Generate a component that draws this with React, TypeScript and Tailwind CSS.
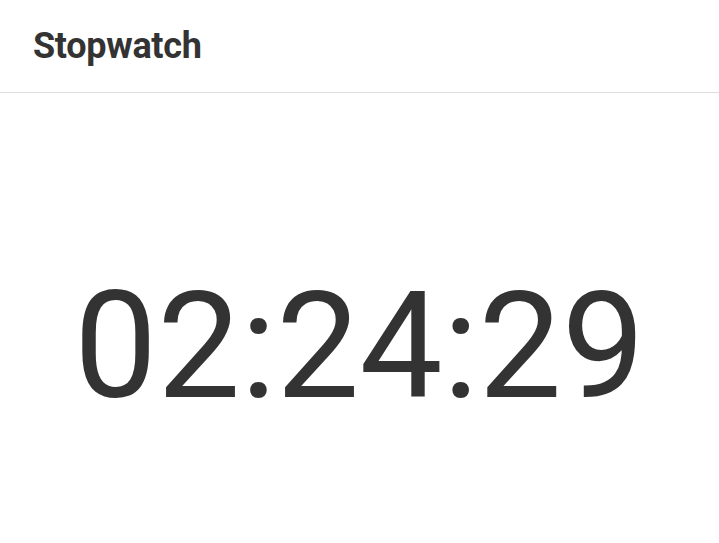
export default function App() {
  return (
    <div
      className="flex h-[543px] w-full flex-col bg-white text-[#333333]"
      style={{ fontFamily: "Roboto, 'Liberation Sans', sans-serif" }}
    >
      <header className="flex h-[93px] shrink-0 items-center border-b border-[#dedede] px-[33px]">
        <h1 className="text-[36px] font-bold leading-none tracking-[-0.3px]">Stopwatch</h1>
      </header>
      <main className="flex flex-1 items-start justify-center pt-[180px]">
        <div className="text-[148px] font-normal leading-none tabular-nums">02:24:29</div>
      </main>
    </div>
  );
}
